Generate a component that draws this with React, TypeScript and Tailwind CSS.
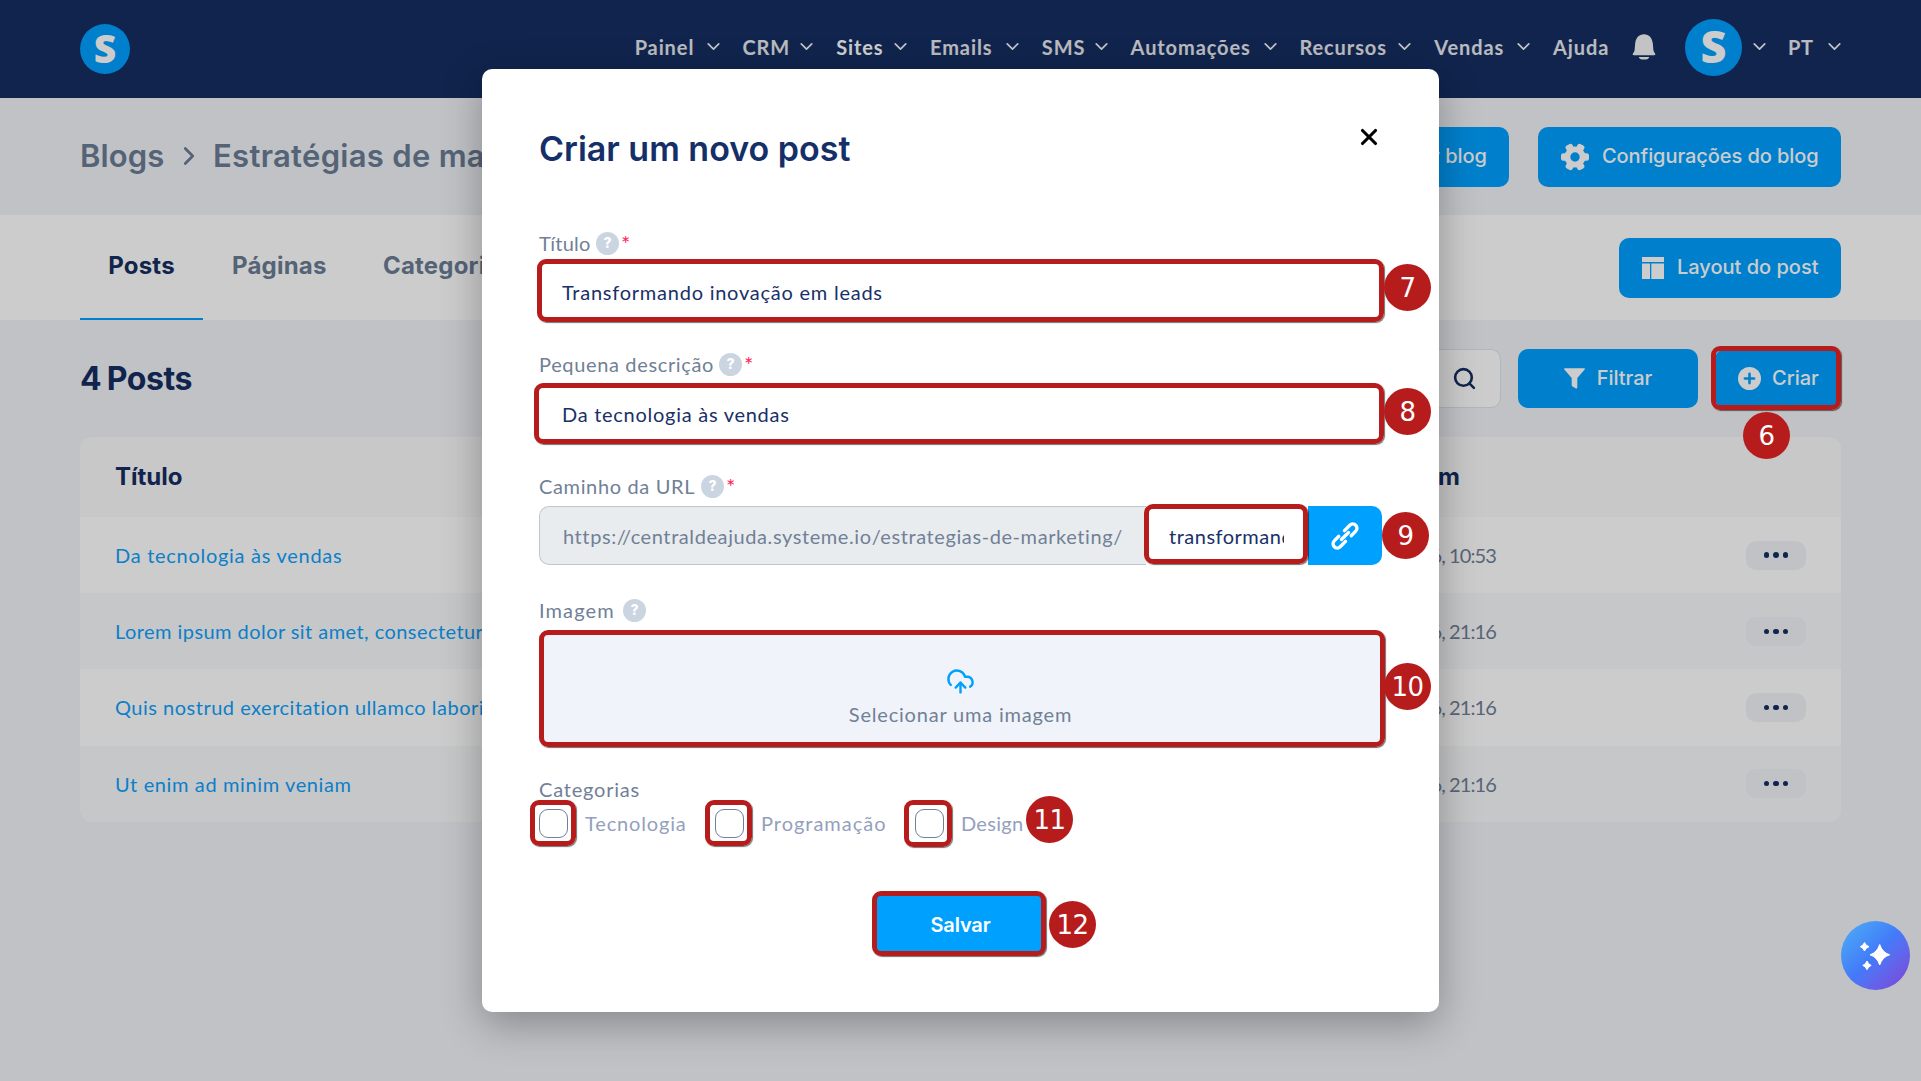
import { ReactNode } from "react";
import clsx from "clsx";
import { ChevronDown, ChevronRight, CloudUpload, Search, X } from "lucide-react";

const navItems = [
  { label: "Painel", width: "w-[60px]" },
  { label: "CRM", width: "w-[46px]" },
  { label: "Sites", width: "w-[46px]", active: true },
  { label: "Emails", width: "w-[64px]" },
  { label: "SMS", width: "w-[41px]" },
  { label: "Automações", width: "w-[121px]" },
  { label: "Recursos", width: "w-[87px]" },
  { label: "Vendas", width: "w-[71px]" },
];

const posts = [
  { title: "Da tecnologia às vendas", date: "12 jan. 2026, 10:53", tracking: "tracking-[0.72px]" },
  {
    title: "Lorem ipsum dolor sit amet, consectetur",
    date: "11 jan. 2026, 21:16",
    tracking: "tracking-[0.44px]",
  },
  {
    title: "Quis nostrud exercitation ullamco laboris",
    date: "11 jan. 2026, 21:16",
    tracking: "tracking-[0.5px]",
  },
  { title: "Ut enim ad minim veniam", date: "11 jan. 2026, 21:16", tracking: "tracking-[0.62px]" },
];

function GearIcon() {
  return (
    <svg viewBox="-14 -14 28 28" className="size-7 fill-white">
      <path
        fillRule="evenodd"
        d="M0-10.5a10.5 10.5 0 1 0 0 21a10.5 10.5 0 1 0 0-21ZM0-4.7a4.7 4.7 0 1 1 0 9.4a4.7 4.7 0 1 1 0-9.4Z"
      />
      {[0, 60, 120, 180, 240, 300].map((deg) => (
        <rect key={deg} x="6" y="-3.8" width="8" height="7.6" rx="2.4" transform={`rotate(${deg})`} />
      ))}
    </svg>
  );
}

function BellIcon() {
  return (
    <svg viewBox="0 0 24 26" className="h-[26px] w-6 fill-white/95">
      <path d="M12 0.3c5.1 0 8.3 3.9 8.8 9l.6 6.8c.1 1 .5 1.8 1.1 2.6l.6.9c.5.8.1 1.7-.9 1.7H1.8c-1 0-1.4-.9-.9-1.7l.6-.9c.6-.8 1-1.6 1.1-2.6l.6-6.8c.5-5.1 3.7-9 8.8-9Z" />
      <path d="M6.8 23h10.4c0 1.6-2 2.6-5.2 2.6s-5.2-1-5.2-2.6Z" />
    </svg>
  );
}

function LayoutIcon() {
  return (
    <svg viewBox="0 0 22 22" className="size-[22px] fill-white">
      <rect width="22" height="5" />
      <rect y="6.5" width="8" height="15.5" />
      <rect x="9.3" y="6.5" width="12.7" height="15.5" />
    </svg>
  );
}

function FilterIcon() {
  return (
    <svg viewBox="0 0 21 21" className="size-[21px] fill-white">
      <path d="M.9.2h19.2c.8 0 1.1.8.6 1.4L13.3 10v9.6c0 .8-.7 1.2-1.4.8L8.2 18.3c-.3-.2-.5-.5-.5-.9V10L.3 1.6C-.2 1 .1.2.9.2Z" />
    </svg>
  );
}

function PlusCircleIcon() {
  return (
    <svg viewBox="0 0 23 23" className="size-[23px]">
      <circle cx="11.5" cy="11.5" r="11.5" className="fill-white" />
      <path d="M11.5 6.9v9.2M6.9 11.5h9.2" className="stroke-[#00a0ff] stroke-[2.6]" strokeLinecap="round" />
    </svg>
  );
}

function ChainIcon() {
  return (
    <svg
      viewBox="-14 -14 28 28"
      className="size-7 fill-none stroke-white stroke-[3.3]"
      strokeLinecap="round"
    >
      <g transform="rotate(-45)">
        <path d="M3.4-4.2H11a4.2 4.2 0 0 1 0 8.4H4.6" />
        <path d="M-3.4 4.2H-11a4.2 4.2 0 0 1 0-8.4H-4.6" />
        <path d="M-5 0H5" />
      </g>
    </svg>
  );
}

function SparklesIcon() {
  return (
    <svg viewBox="0 0 69 69" className="size-[69px] fill-white stroke-white stroke-1" strokeLinejoin="round">
      <path d="M38.7 23.5Q41.3 31.6 48.7 33.8Q41.3 36 38.7 44Q36.1 36 29 33.8Q36.1 31.6 38.7 23.5Z" />
      <path d="M23.5 21.5Q24.7 24.8 28 25.7Q24.7 26.6 23.5 30Q22.3 26.6 19.3 25.7Q22.3 24.8 23.5 21.5Z" />
      <path d="M26 40Q27.2 43.4 30.2 44.4Q27.2 45.4 26 48.7Q24.8 45.4 21.8 44.4Q24.8 43.4 26 40Z" />
    </svg>
  );
}

function NavChevron() {
  return <ChevronDown className="-mx-[4px] -mt-0.5 size-[21px] shrink-0 text-white/95" strokeWidth={2} />;
}

function Logo({ className }: { className: string }) {
  return (
    <div
      className={clsx(
        "flex items-center justify-center rounded-full bg-[#00a0ff] font-['Noto_Sans',sans-serif] leading-none font-black text-white",
        className,
      )}
    >
      <span className="-mt-[3px]">S</span>
    </div>
  );
}

/* red outline drawn over the highlighted control */
function Outline({ className }: { className: string }) {
  return (
    <div
      className={clsx(
        "pointer-events-none absolute rounded-[9px] border-5 border-[#b71c1c] shadow-[1px_1px_1px_rgba(0,0,0,0.55)]",
        className,
      )}
    />
  );
}

function Step({ n, className }: { n: number; className: string }) {
  return (
    <span
      className={clsx(
        "absolute flex size-[47px] items-center justify-center rounded-full bg-[#b71c1c] font-['DejaVu_Sans',sans-serif] text-[26px] leading-none font-normal tracking-[-0.5px] text-white",
        className,
      )}
    >
      {n}
    </span>
  );
}

interface LabelProps {
  children: ReactNode;
  width: string;
  help?: boolean;
  required?: boolean;
}

function Label({ children, width, help = true, required = false }: LabelProps) {
  return (
    <div className="flex h-7 items-center text-[#718096]">
      <span className={clsx("-mt-0.5 whitespace-nowrap", width)}>{children}</span>
      {help && (
        <span className="-mt-0.5 flex size-[23px] items-center justify-center rounded-full bg-[#cbd5e1] font-[Inter,sans-serif] text-[14px] font-extrabold text-white">
          ?
        </span>
      )}
      {required && <span className="ml-[2px] text-[22px] leading-none text-[#ff1f5a]">*</span>}
    </div>
  );
}

function Page() {
  return (
    <div className="flex h-full flex-col">
      <header className="flex h-[98px] shrink-0 items-center bg-[#152d61] pr-20 pl-20">
        <Logo className="size-[50px] text-[39px]" />
        <nav className="mb-1 ml-auto flex items-center text-xl font-bold text-white/90">
          {navItems.map((item) => (
            <div key={item.label} className="mr-[22.8px] flex items-center gap-3">
              <span className={clsx("tracking-[0.9px] whitespace-nowrap", item.width, item.active && "text-white")}>
                {item.label}
              </span>
              <NavChevron />
            </div>
          ))}
          <span className="w-[79px] tracking-[0.9px]">Ajuda</span>
          <BellIcon />
          <Logo className="ml-[29px] size-[57px] text-[45px]" />
          <div className="ml-[11px]">
            <NavChevron />
          </div>
          <span className="mr-4 ml-[22px] w-6 tracking-[0.5px]">PT</span>
          <NavChevron />
        </nav>
      </header>

      <section className="flex h-[117px] shrink-0 items-center justify-between px-20 font-[Inter,sans-serif]">
        <div className="-mt-0.5 flex items-center text-[31px] font-semibold text-[#6b7c95]">
          <span className="w-[94px] tracking-[0.1px]">Blogs</span>
          <ChevronRight className="mr-[9px] size-[30px]" strokeWidth={2.2} />
          <span className="tracking-[0.3px]">Estratégias de marketing</span>
        </div>
        <div className="flex gap-[29px] text-xl font-medium text-white">
          <div className="flex h-[60px] items-center rounded-[10px] bg-[#00a0ff] px-[22px] pb-0.5">Visualizar blog</div>
          <div className="flex h-[60px] w-[303px] items-center gap-[13px] rounded-[10px] bg-[#00a0ff] pl-[23px]">
            <GearIcon />
            <span className="-mt-0.5 tracking-[-0.07px]">Configurações do blog</span>
          </div>
        </div>
      </section>

      <section className="flex h-[105px] shrink-0 items-center justify-between bg-white px-20 font-[Inter,sans-serif]">
        <div className="flex h-full text-2xl font-bold tracking-[0.2px] text-[#6b7c95]">
          <div className="h-full w-[123px] border-b-2 border-[#00a0ff] pt-[35px] text-center text-[#152d61]">Posts</div>
          <div className="w-[151px] pt-[35px] pl-[29px]">Páginas</div>
          <div className="pt-[35px] pl-[29px]">Categorias</div>
        </div>
        <div className="flex h-[60px] w-[222px] items-center gap-[13px] rounded-[10px] bg-[#00a0ff] pl-[23px] text-xl font-medium text-white">
          <LayoutIcon />
          <span className="-mt-0.5">Layout do post</span>
        </div>
      </section>

      <main className="px-20 pt-[29px]">
        <div className="flex h-[59px] items-center font-[Inter,sans-serif]">
          <h1 className="text-[32px] font-bold tracking-[-0.45px] [word-spacing:-1.5px] text-[#152d61]">4 Posts</h1>
          <div className="ml-auto flex h-[59px] w-[420px] items-center justify-end rounded-[10px] border border-[#dfe3ea] bg-white pr-[23px]">
            <Search className="size-[25px] text-[#152d61]" strokeWidth={2.5} />
          </div>
          <div className="ml-[17px] flex h-[59px] w-[180px] items-center justify-center gap-3 rounded-[10px] bg-[#00a0ff] text-xl font-medium text-white">
            <FilterIcon />
            <span className="-mt-0.5">Filtrar</span>
          </div>
          <div className="ml-[17px] flex h-[59px] w-[126px] items-center gap-[11px] rounded-[10px] bg-[#00a0ff] pl-[23px] text-xl font-medium text-white">
            <PlusCircleIcon />
            <span className="-mt-0.5">Criar</span>
          </div>
        </div>

        <div className="mt-[29px] overflow-hidden rounded-xl">
          <div className="flex h-20 items-center bg-[#fafbfc] pl-[35px] font-[Inter,sans-serif] text-2xl font-bold text-[#152d61]">
            <span className="w-[1345px]">Título</span>
            <span className="-ml-[200px] w-[200px] text-right">Criado em</span>
          </div>
          {posts.map((post) => (
            <div key={post.title} className="flex h-[76.2px] items-center px-[35px] even:bg-white odd:bg-[#f8f9fb]">
              <span className={clsx("w-[1000px] text-[#0f9ffb]", post.tracking)}>{post.title}</span>
              <span className="w-[381px] text-right tracking-[-0.9px] text-[#718096]">{post.date}</span>
              <div className="ml-auto flex h-[29px] w-[60px] items-center justify-center gap-1 rounded-[10px] bg-[#f1f3f8]">
                <i className="size-[5.5px] rounded-full bg-[#152d61]" />
                <i className="size-[5.5px] rounded-full bg-[#152d61]" />
                <i className="size-[5.5px] rounded-full bg-[#152d61]" />
              </div>
            </div>
          ))}
        </div>
      </main>
    </div>
  );
}

function Category({ label, className }: { label: string; className?: string }) {
  return (
    <div className={clsx("flex h-[29px] items-center", className)}>
      <span className="mr-[17px] size-[29px] rounded-[9px] border border-[#718096] bg-white" />
      <span className="-mt-px whitespace-nowrap text-[#94a0bd]">{label}</span>
    </div>
  );
}

function CreatePostModal() {
  return (
    <div className="mt-[69px] h-[943px] w-[957px] rounded-[10px] bg-white pr-[57px] pl-[57px] text-[#1a3068] shadow-[0_12px_40px_rgba(0,0,0,0.3)]">
      <div className="flex h-[161px] items-center justify-between pb-0.5 font-[Inter,sans-serif]">
        <h2 className="text-[34px] font-semibold text-[#152f68]">Criar um novo post</h2>
        <X className="mb-[23px] size-[26px] text-black" strokeWidth={2.9} />
      </div>

      <Label width="w-[57px]" required>
        <span className="tracking-[0.2px]">Título</span>
      </Label>
      <div className="relative mt-[3px] flex h-[59px] items-center pt-0.5 pl-[23px] tracking-[0.76px]">
        Transformando inovação em leads
        <Outline className="-top-[2px] -left-[2px] h-[63px] w-[847px]" />
        <Step n={7} className="top-[3px] left-[845px]" />
      </div>

      <div className="mt-[31px]">
        <Label width="w-[180px]" required>
          <span className="tracking-[0.65px]">Pequena descrição</span>
        </Label>
      </div>
      <div className="relative mt-[6px] flex h-[59px] items-center pb-0.5 pl-[23px] tracking-[0.73px]">
        Da tecnologia às vendas
        <Outline className="-top-[2px] -left-[5px] h-[61px] w-[850px]" />
        <Step n={8} className="top-[3px] left-[845px]" />
      </div>

      <div className="mt-[29px]">
        <Label width="w-[162px]" required>
          <span className="tracking-[0.64px]">Caminho da URL</span>
        </Label>
      </div>
      <div className="relative mt-[5px] flex h-[59px] w-[843px]">
        <div className="flex w-[607px] items-center rounded-l-[10px] border border-r-0 border-[#bfc7ce] bg-[#e9ecef] pl-[23px] tracking-[0.59px] text-[#718096]">
          https://centraldeajuda.systeme.io/estrategias-de-marketing/
        </div>
        <div className="flex w-[162px] items-center pr-[24px] pl-[23px]">
          <span className="overflow-hidden tracking-[0.5px] whitespace-nowrap">transformand</span>
        </div>
        <div className="flex flex-1 items-center justify-center rounded-r-[10px] bg-[#00a0ff]">
          <ChainIcon />
        </div>
        <Outline className="-top-[2px] left-[605px] h-[60px] w-[164px]" />
        <Step n={9} className="top-[6px] left-[843px]" />
      </div>

      <div className="mt-8">
        <Label width="w-[84px]">
          <span className="tracking-[1.1px]">Imagem</span>
        </Label>
      </div>
      <div className="relative mt-[6px] flex h-[117px] w-[846px] flex-col items-center rounded-[9px] bg-[#f0f3f9] pt-[36px]">
        <CloudUpload className="-ml-1 size-[29px] text-[#00a0ff]" />
        <span className="mt-[4px] -ml-[3px] leading-7 tracking-[0.8px] text-[#718096]">Selecionar uma imagem</span>
        <Outline className="-top-px left-0 h-[117px] w-[846px]" />
        <Step n={10} className="top-[32px] left-[845px]" />
      </div>

      <div className="mt-[28px]">
        <Label width="w-[120px]" help={false}>
          <span className="tracking-[0.79px]">Categorias</span>
        </Label>
      </div>
      <div className="relative mt-[5px] flex h-[29px]">
        <Category label="Tecnologia" className="w-[176px] tracking-[0.85px]" />
        <Category label="Programação" className="w-[200px] tracking-[0.98px]" />
        <Category label="Design" className="tracking-[0.3px]" />
        <Outline className="-top-[9px] -left-[9px] h-[46px] w-[46px]" />
        <Outline className="-top-[9px] left-[166px] h-[46px] w-[47px]" />
        <Outline className="-top-[9px] left-[365px] h-[47px] w-[48px]" />
        <Step n={11} className="-top-[13px] left-[487px]" />
      </div>

      <div className="relative mt-[54px] ml-[334px] flex h-[64px] w-[173px] items-center justify-center rounded-[9px] bg-[#00a0ff] pt-0.5 pl-[2px] font-[Inter,sans-serif] text-xl font-semibold text-white">
        <span className="tracking-[-0.15px]">Salvar</span>
        <Outline className="-top-px -left-px h-[65px] w-[174px]" />
        <Step n={12} className="top-[9px] left-[176px]" />
      </div>
    </div>
  );
}

export default function App() {
  return (
    <div className="relative h-[1081px] w-[1921px] overflow-hidden bg-[#f1f3f8] font-[Lato,sans-serif] text-xl leading-7">
      <Page />
      <div className="absolute inset-0 flex items-start justify-center bg-black/20">
        <CreatePostModal />
      </div>
      <Outline className="top-[346px] left-[1711px] h-[64px] w-[130px]" />
      <Step n={6} className="top-[412px] left-[1743px]" />
      <div className="absolute top-[921px] left-[1841px] size-[69px] rounded-full bg-linear-135 from-[#4fb0f5] via-[#4379f8] to-[#7b3fd6]">
        <SparklesIcon />
      </div>
    </div>
  );
}
